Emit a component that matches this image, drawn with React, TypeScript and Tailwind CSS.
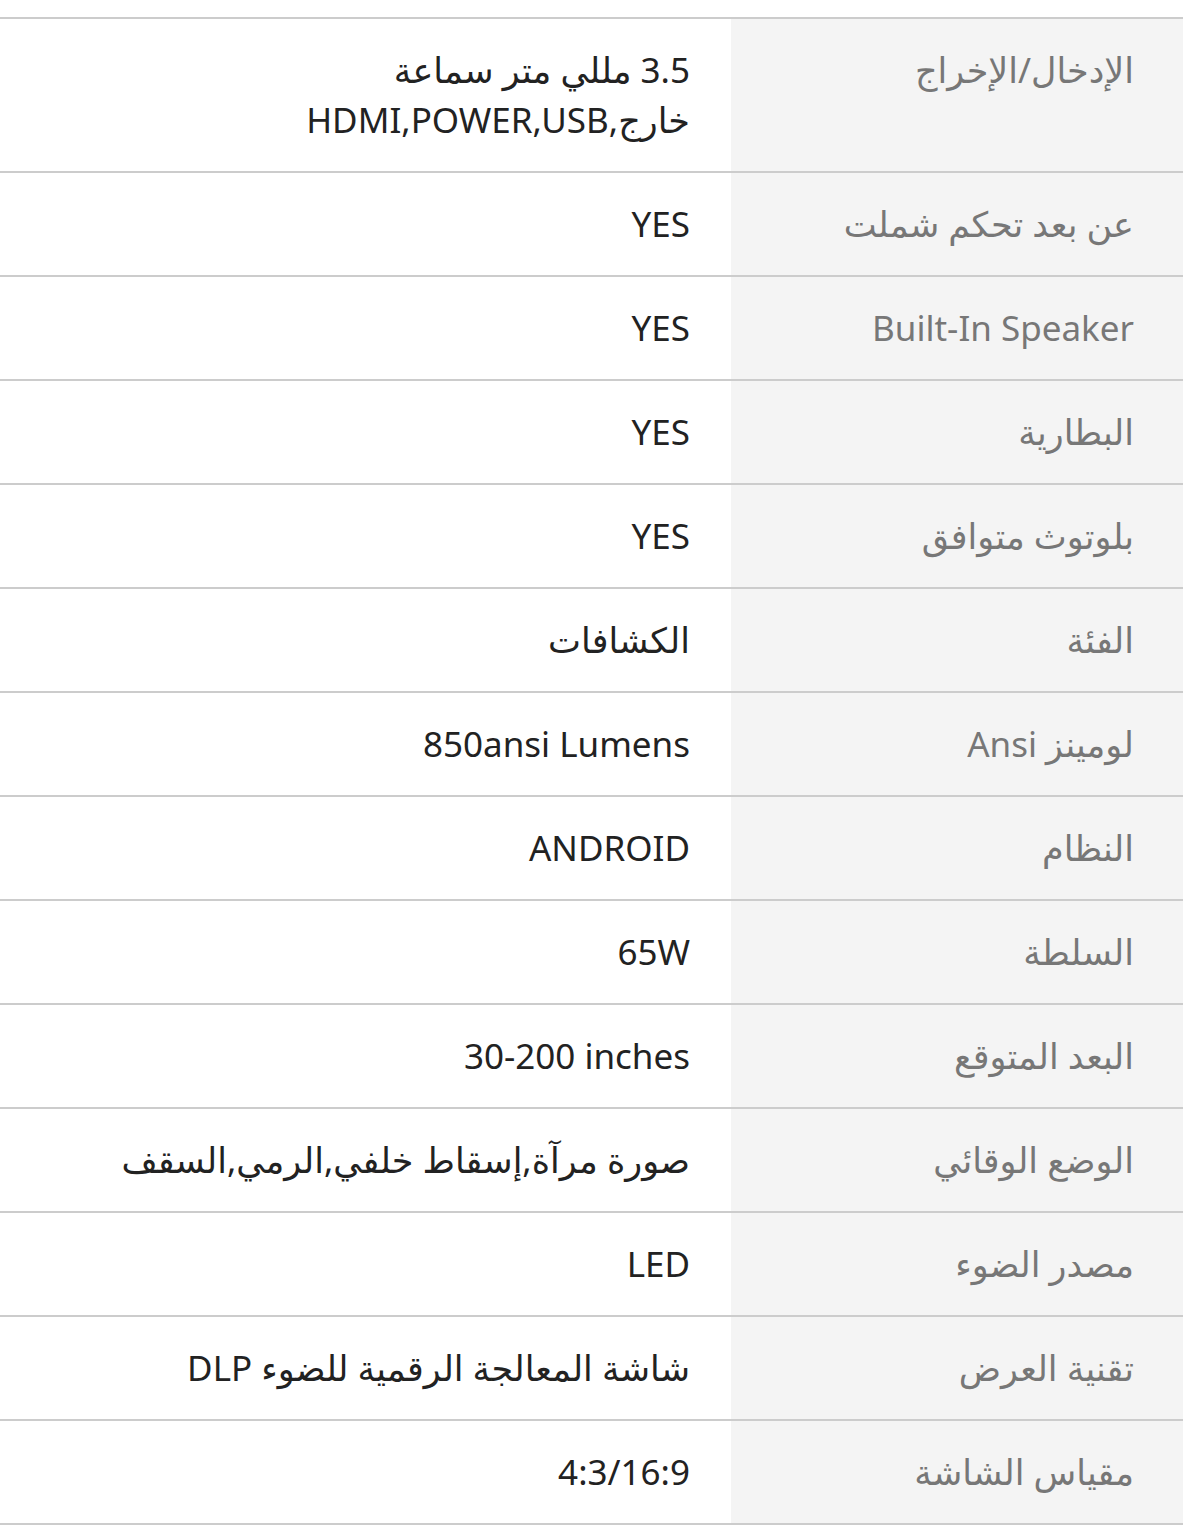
const specs: { label: string; value: React.ReactNode }[] = [
  {
    label: 'الإدخال/الإخراج',
    value: (
      <>
        3.5 مللي متر سماعة
        <br />
        خارج,HDMI,POWER,USB
      </>
    ),
  },
  { label: 'عن بعد تحكم شملت', value: 'YES' },
  { label: 'Built-In Speaker', value: 'YES' },
  { label: 'البطارية', value: 'YES' },
  { label: 'بلوتوث متوافق', value: 'YES' },
  { label: 'الفئة', value: 'الكشافات' },
  { label: 'لومينز Ansi', value: '850ansi Lumens' },
  { label: 'النظام', value: 'ANDROID' },
  { label: 'السلطة', value: '65W' },
  { label: 'البعد المتوقع', value: <bdi dir="ltr">30-200 inches</bdi> },
  { label: 'الوضع الوقائي', value: 'صورة مرآة,إسقاط خلفي,الرمي,السقف' },
  { label: 'مصدر الضوء', value: 'LED' },
  { label: 'تقنية العرض', value: 'شاشة المعالجة الرقمية للضوء DLP' },
  { label: 'مقياس الشاشة', value: '4:3/16:9' },
];

export default function App() {
  return (
    <div className="min-h-screen bg-white pt-[17px] font-['Noto_Sans','DejaVu_Sans',sans-serif]">
      <table dir="rtl" className="w-full border-collapse">
        <tbody>
          {specs.map((row, i) => (
            <tr key={i} className="border-y-2 border-[#cccccc]">
              <th className="w-[452px] bg-[#f4f4f4] pr-[49px] pl-4 py-[26px] text-right align-top text-[35px] font-normal leading-[50px] text-[#777777]">
                {row.label}
              </th>
              <td className="pr-[41px] pl-4 py-[26px] text-right align-top text-[35px] leading-[50px] text-[#222222]">
                {row.value}
              </td>
            </tr>
          ))}
        </tbody>
      </table>
    </div>
  );
}
